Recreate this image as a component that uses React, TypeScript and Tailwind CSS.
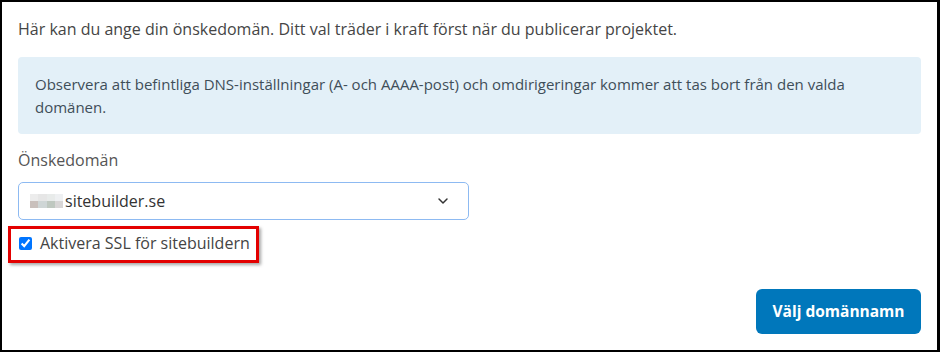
import { ChevronDown } from "lucide-react";

export default function App() {
  return (
    <div className="w-[940px] h-[352px] bg-white" style={{ fontFamily: "'Open Sans', 'Noto Sans', sans-serif" }}>
      <div className="w-[940px] h-[352px] border-2 border-r-[3px] border-black bg-white px-4 pt-4 pb-4 flex flex-col text-[15px] leading-[23px] text-[#454545]">
        <p className="text-[16px]">Här kan du ange din önskedomän. Ditt val träder i kraft först när du publicerar projektet.</p>

        {/* info-ruta */}
        <div className="mt-4 w-[903px] rounded bg-[#e3f0f8] px-[17px] py-4 leading-[22.5px] text-[#3f4e59]">
          Observera att befintliga DNS-inställningar (A- och AAAA-post) och omdirigeringar kommer att tas bort från den valda domänen.
        </div>

        <label className="mt-[14px] text-[16px] leading-[24px] text-[#555]">Önskedomän</label>

        <div className="mt-[10px] flex h-[38px] w-[451px] items-center justify-between rounded-[5px] border border-[#8dbaf2] pl-[11px] pr-[17px]">
          <div className="flex items-center text-[16px] text-[#333]">
            {/* suddad subdomän */}
            <div className="mr-[2px] grid grid-cols-4 grid-rows-2 w-[33px] h-[14px]">
              <div className="bg-[#ececec]" />
              <div className="bg-[#e6e6e6]" />
              <div className="bg-[#e8ebea]" />
              <div className="bg-[#eef0f2]" />
              <div className="bg-[#c9c0bc]" />
              <div className="bg-[#cfd6d6]" />
              <div className="bg-[#bfc8c0]" />
              <div className="bg-[#d8d6d6]" />
            </div>
            <span>sitebuilder.se</span>
          </div>
          <ChevronDown className="h-[16px] w-[16px] text-[#333]" strokeWidth={2.2} />
        </div>

        {/* kryssruta med markering */}
        <div className="relative mt-[12px] flex items-center">
          <input type="checkbox" defaultChecked className="ml-[1px] h-[13px] w-[13px] accent-[#0075ff]" />
          <span className="ml-[8px] text-[16px] text-[#444]">Aktivera SSL för sitebuildern</span>
          <div className="pointer-events-none absolute left-[-10px] top-[-6px] h-[37px] w-[251px] border-[3px] border-[#e30000] shadow-[2px_2px_3px_rgba(0,0,0,0.35)]" />
        </div>

        <div className="mt-auto flex justify-end">
          <button className="h-[45px] w-[165px] rounded-[6px] bg-[#0077bb] text-[15.5px] font-bold text-white">
            Välj domännamn
          </button>
        </div>
      </div>
    </div>
  );
}
